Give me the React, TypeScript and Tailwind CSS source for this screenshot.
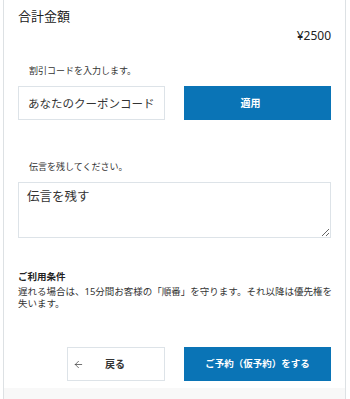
import { ArrowLeft } from "lucide-react";

const jp = "font-['Noto_Sans','Noto_Sans_CJK_JP',sans-serif]";

export default function App() {
  return (
    <div className={`w-[350px] h-[399px] bg-white pl-[3px] pr-[4px] overflow-hidden text-[#333] ${jp}`}>
      <div className="h-full flex flex-col border-x border-[#dde1e4]">
        <div className="flex-1 px-[14px]">
          {/* total */}
          <h2 className="pt-[9px] text-[13px] leading-[15px] text-[#222]">合計金額</h2>
          <p className="mt-[5px] text-right text-[12px] leading-[14px] text-[#222]">¥2500</p>

          {/* coupon */}
          <p className="mt-[22px] pl-[11px] text-[9px] leading-[12px]">割引コードを入力します。</p>
          <div className="mt-[9px] grid grid-cols-2 gap-[19px]">
            <input
              className="h-[34px] border border-[#dde3e8] px-[9px] text-[11.5px] outline-none placeholder:text-[#333]"
              placeholder="あなたのクーポンコード"
            />
            <button className="h-[34px] bg-[#0a74b6] text-white text-[10px] font-bold pr-[14px]">適用</button>
          </div>

          {/* message */}
          <p className="mt-[41px] pl-[11px] text-[9px] leading-[12px]">伝言を残してください。</p>
          <textarea
            className="mt-[9px] block w-full h-[56px] border border-[#dde3e8] px-[8px] pt-[7px] text-[12.5px] leading-[14px] outline-none placeholder:text-[#333]"
            placeholder="伝言を残す"
          />

          {/* terms */}
          <p className="mt-[33px] text-[9.5px] leading-[12px] font-bold text-[#222]">ご利用条件</p>
          <p className="mt-[3px] text-[9.5px] leading-[12px] whitespace-nowrap">
            遅れる場合は、15分間お客様の「順番」を守ります。それ以降は優先権を
            <br />
            失います。
          </p>

          {/* actions */}
          <div className="mt-[37px] grid grid-cols-2 gap-[19px]">
            <div className="flex justify-end">
              <button className="w-[98px] h-[34px] border border-[#dde3e8] flex items-center pl-[5px] text-[10px] font-bold">
                <ArrowLeft size={11} strokeWidth={1.5} />
                <span className="ml-[21px]">戻る</span>
              </button>
            </div>
            <button className="h-[34px] bg-[#0a74b6] text-white text-[9.5px] font-bold">ご予約（仮予約）をする</button>
          </div>
        </div>
        <div className="h-[11px] bg-[#f8f8f8]" />
      </div>
    </div>
  );
}
